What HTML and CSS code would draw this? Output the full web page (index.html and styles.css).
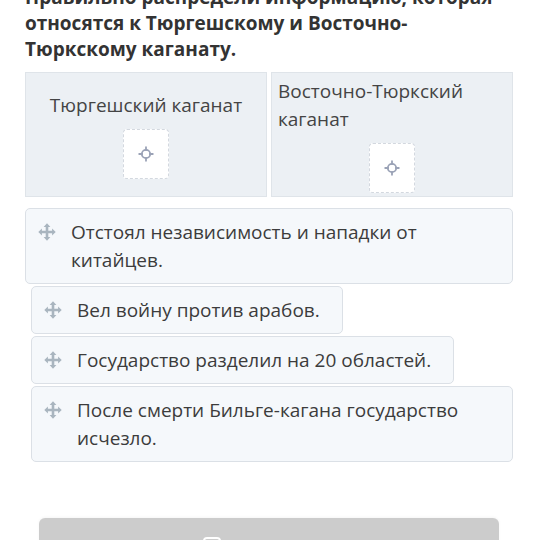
FILE: index.html
```html
<!DOCTYPE html>
<html lang="ru">

<head>
  <meta charset="UTF-8">
  <meta name="viewport" content="width=device-width, initial-scale=1.0">
  <title>Распредели информацию</title>
  <link rel="stylesheet" href="styles.css">
</head>

<body>
  <main class="task">
    <h2 class="question">Правильно распредели информацию, которая относятся к Тюргешскому и Восточно-Тюркскому каганату.</h2>

    <section class="columns">
      <div class="column">
        <p class="column-title">Тюргешский каганат</p>
        <div class="dropzone">
          <svg viewBox="0 0 16 16" width="16" height="16">
            <circle cx="8" cy="8" r="4.2" fill="none" stroke="currentColor" stroke-width="1.8" />
            <path d="M8 1.2v3M8 11.8v3M1.2 8h3M11.8 8h3" stroke="currentColor" stroke-width="1.8" stroke-linecap="round" />
          </svg>
        </div>
      </div>
      <div class="column">
        <p class="column-title">Восточно-Тюркский каганат</p>
        <div class="dropzone">
          <svg viewBox="0 0 16 16" width="16" height="16">
            <circle cx="8" cy="8" r="4.2" fill="none" stroke="currentColor" stroke-width="1.8" />
            <path d="M8 1.2v3M8 11.8v3M1.2 8h3M11.8 8h3" stroke="currentColor" stroke-width="1.8" stroke-linecap="round" />
          </svg>
        </div>
      </div>
    </section>

    <ul class="cards">
      <li class="card">
        <svg class="move" viewBox="0 0 18 18" width="18" height="18">
          <path d="M9 3v12M3 9h12" stroke="currentColor" stroke-width="2.6" />
          <path d="M9 0.3l3.4 3.6H5.6zM9 17.7l3.4-3.6H5.6zM0.3 9l3.6 3.4V5.6zM17.7 9l-3.6 3.4V5.6z" fill="currentColor" />
        </svg>
        <span>Отстоял независимость и нападки от китайцев.</span>
      </li>
      <li class="card">
        <svg class="move" viewBox="0 0 18 18" width="18" height="18">
          <path d="M9 3v12M3 9h12" stroke="currentColor" stroke-width="2.6" />
          <path d="M9 0.3l3.4 3.6H5.6zM9 17.7l3.4-3.6H5.6zM0.3 9l3.6 3.4V5.6zM17.7 9l-3.6 3.4V5.6z" fill="currentColor" />
        </svg>
        <span>Вел войну против арабов.</span>
      </li>
      <li class="card">
        <svg class="move" viewBox="0 0 18 18" width="18" height="18">
          <path d="M9 3v12M3 9h12" stroke="currentColor" stroke-width="2.6" />
          <path d="M9 0.3l3.4 3.6H5.6zM9 17.7l3.4-3.6H5.6zM0.3 9l3.6 3.4V5.6zM17.7 9l-3.6 3.4V5.6z" fill="currentColor" />
        </svg>
        <span>Государство разделил на 20 областей.</span>
      </li>
      <li class="card">
        <svg class="move" viewBox="0 0 18 18" width="18" height="18">
          <path d="M9 3v12M3 9h12" stroke="currentColor" stroke-width="2.6" />
          <path d="M9 0.3l3.4 3.6H5.6zM9 17.7l3.4-3.6H5.6zM0.3 9l3.6 3.4V5.6zM17.7 9l-3.6 3.4V5.6z" fill="currentColor" />
        </svg>
        <span>После смерти Бильге-кагана государство исчезло.</span>
      </li>
    </ul>

    <button class="check" disabled>
      <svg viewBox="0 0 18 18" width="18" height="18">
        <rect x="1" y="1" width="16" height="16" rx="3" fill="none" stroke="currentColor" stroke-width="2" />
      </svg>
      <span>Проверить</span>
    </button>
  </main>
</body>

</html>
```

FILE: styles.css
```css
body {
  font-family: "Open Sans", "Noto Sans", sans-serif;
  background-color: #fff;
  color: #3a3a3a;
  margin: 0;
  height: 540px;
  overflow: hidden;
}

.task {
  padding: 0 26px 0 25px;
}

.question {
  font-size: 19px;
  font-weight: 700;
  line-height: 26px;
  color: #333;
  margin: -16px 0 10px;
}

.columns {
  display: grid;
  grid-template-columns: 1fr 1fr;
  gap: 4px;
}

.column {
  box-sizing: border-box;
  min-height: 125px;
  padding: 3px 6px;
  background-color: #ecf0f4;
  border: 1px solid #dfe4e9;
  display: flex;
  flex-direction: column;
  justify-content: center;
  align-items: center;
  gap: 10px;
}

.column-title {
  margin: 0;
  font-size: 19px;
  line-height: 28px;
  color: #444;
}

.dropzone {
  width: 46px;
  height: 50px;
  box-sizing: border-box;
  background-color: #fff;
  border: 1px dashed #d3d8df;
  border-radius: 4px;
  display: flex;
  justify-content: center;
  align-items: center;
  color: #9aa2b6;
}

.cards {
  list-style: none;
  padding: 0;
  margin: 11px 0 0;
  display: flex;
  flex-direction: column;
  align-items: flex-start;
  gap: 2px;
}

.card {
  display: flex;
  align-items: flex-start;
  gap: 15px;
  max-width: calc(100% - 6px);
  margin-left: 6px;
  box-sizing: border-box;
  padding: 9px 22px 9px 12px;
  background-color: #f5f8fb;
  border: 1px solid #dbe0e6;
  border-radius: 5px;
  font-size: 19px;
  line-height: 28px;
  color: #3c3c3c;

  &:first-child {
    margin-left: 0;
    max-width: 100%;
    width: 100%;
  }

  .move {
    flex: none;
    margin-top: 5px;
    color: #a9b5bf;
  }
}

.check {
  display: flex;
  justify-content: center;
  align-items: flex-start;
  gap: 8px;
  box-sizing: border-box;
  width: calc(100% - 28px);
  height: 50px;
  margin: 56px 14px 0;
  padding: 19px 0 0;
  background-color: #ccc;
  border: 0;
  border-radius: 6px;
  color: #fff;
  font-family: inherit;
  font-size: 19px;
  font-weight: 600;
  box-shadow: 0 -1px 3px rgba(0, 0, 0, 0.04);
}
```
